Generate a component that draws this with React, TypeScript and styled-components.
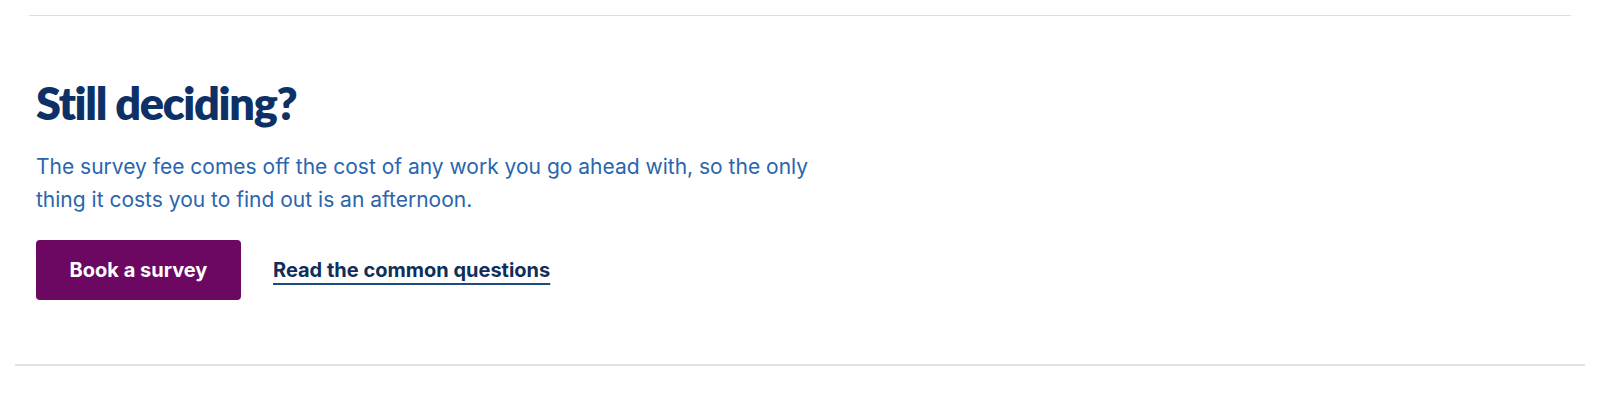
import React from "react";
import styled, { createGlobalStyle } from "styled-components";

const Global = createGlobalStyle`
  html, body { margin: 0; padding: 0; background: #ffffff; }
  body { font-family: "Inter", "Noto Sans", sans-serif; }
`;

const Page = styled.div`
  padding: 15px 15px 0;
`;

const Section = styled.section`
  border-bottom: 2px solid #e2e2e2;
`;

const Inner = styled.div`
  margin: 0 14px;
  border-top: 1px solid #dedede;
  padding: 60px 7px 64px;
`;

const Heading = styled.h2`
  margin: 0 0 20px;
  font-family: "Lato", "Noto Sans", sans-serif;
  font-weight: 800;
  font-size: 45px;
  line-height: 1.2;
  letter-spacing: -1.3px;
  color: #0d3166;
`;

const Lead = styled.p`
  margin: 0 0 24px;
  max-width: 800px;
  font-size: 21px;
  line-height: 33px;
  color: #2a65ad;
`;

const Actions = styled.div`
  display: flex;
  align-items: center;
  gap: 32px;
`;

const PrimaryButton = styled.a`
  display: inline-flex;
  align-items: center;
  justify-content: center;
  width: 205px;
  height: 60px;
  box-sizing: border-box;
  border-radius: 4px;
  background: #6c0861;
  color: #ffffff;
  font-weight: 700;
  font-size: 20px;
  text-decoration: none;
`;

const TextLink = styled.a`
  color: #0f2f5a;
  font-weight: 700;
  font-size: 20px;
  text-decoration: underline;
  text-decoration-thickness: 2px;
  text-underline-offset: 6px;
  text-decoration-color: #1e4c7e;
`;

export default function App() {
  return (
    <>
      <Global />
      <Page>
        <Section>
          <Inner>
            <Heading>Still deciding?</Heading>
            <Lead>
              The survey fee comes off the cost of any work you go ahead with, so the only
              thing it costs you to find out is an afternoon.
            </Lead>
            <Actions>
              <PrimaryButton href="#">Book a survey</PrimaryButton>
              <TextLink href="#">Read the common questions</TextLink>
            </Actions>
          </Inner>
        </Section>
      </Page>
    </>
  );
}
